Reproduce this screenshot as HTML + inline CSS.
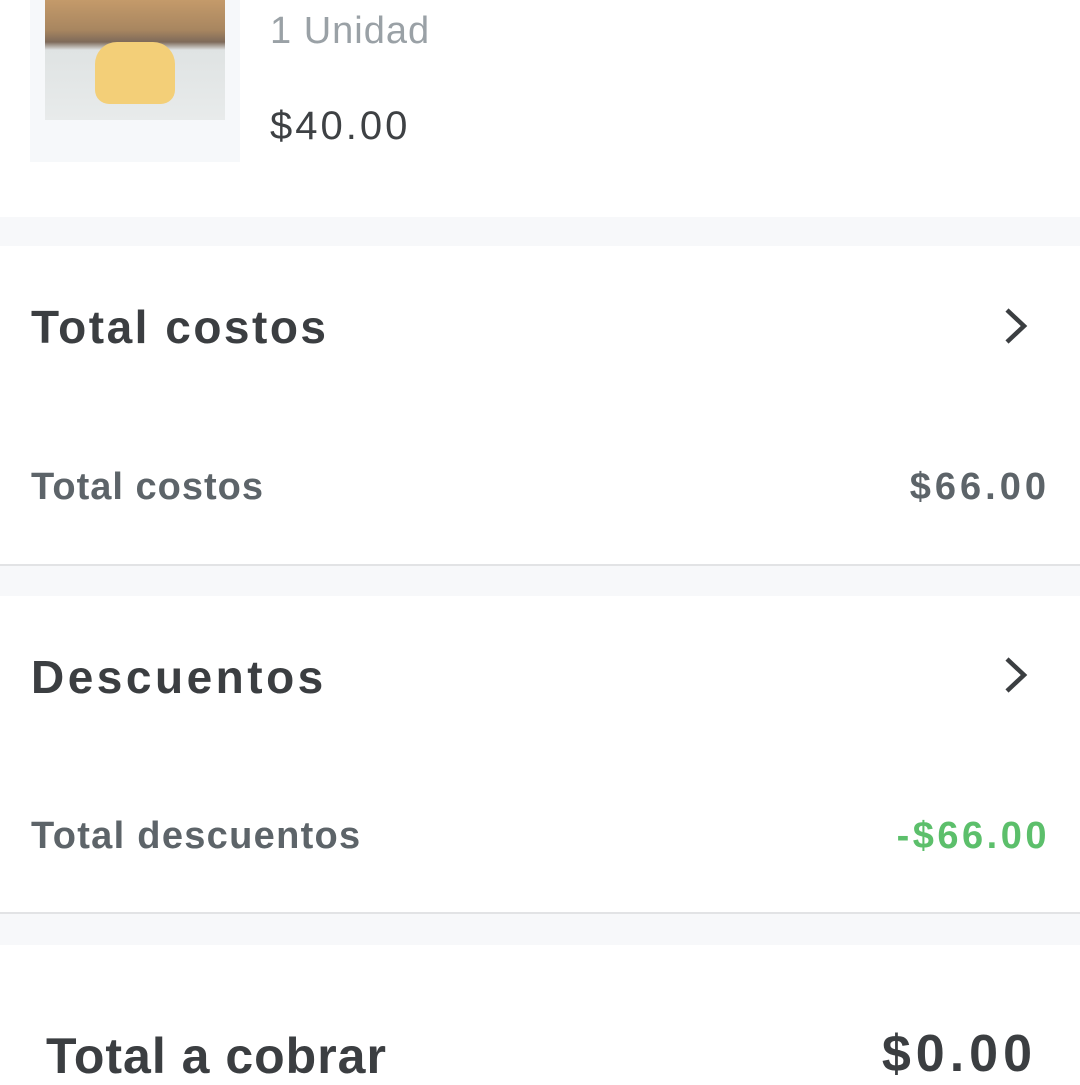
<!DOCTYPE html>
<html><head><meta charset="utf-8"><style>
body{margin:0;width:1080px;height:1080px;overflow:hidden;background:#fff;font-family:"Liberation Sans",sans-serif;position:relative}
.a{position:absolute;white-space:nowrap}
.band{position:absolute;left:0;width:1080px;background:#f7f8fa}
.line{position:absolute;left:0;width:1080px;height:2px;background:#e2e3e5}
.h{font-size:46px;font-weight:bold;color:#3b3e41}
.s{font-size:38px;font-weight:bold;color:#5d6469}
</style></head><body>
<div class="a" style="left:30px;top:0;width:210px;height:162px;background:#f6f8fa"></div>
<div class="a" style="left:45px;top:0;width:180px;height:120px;background:linear-gradient(#c49a6a 0,#a88660 30px,#7e6a5a 42px,#dfe3e3 50px,#e8ebeb 120px)"></div>
<div class="a" style="left:95px;top:42px;width:80px;height:62px;border-radius:22px 22px 14px 14px;background:#f3cf78"></div>
<div class="a" style="left:270px;top:10px;font-size:38px;color:#9aa1a6;letter-spacing:1px">1 Unidad</div>
<div class="a" style="left:270px;top:104px;font-size:40px;color:#3e4144;letter-spacing:3px">$40.00</div>
<div class="band" style="top:217px;height:29px"></div>
<div class="a h" style="left:31px;top:300px;letter-spacing:2.5px">Total costos</div>
<svg class="a" style="left:1000px;top:305px" width="34" height="42"><path d="M7 5 L24 21 L7 37" fill="none" stroke="#3b3e41" stroke-width="4.5"/></svg>
<div class="a s" style="left:31px;top:466px;letter-spacing:1px">Total costos</div>
<div class="a s" style="right:30px;top:466px;letter-spacing:4px">$66.00</div>
<div class="line" style="top:564px"></div>
<div class="band" style="top:566px;height:30px"></div>
<div class="a h" style="left:31px;top:650px;letter-spacing:3.5px">Descuentos</div>
<svg class="a" style="left:1000px;top:654px" width="34" height="42"><path d="M7 5 L24 21 L7 37" fill="none" stroke="#3b3e41" stroke-width="4.5"/></svg>
<div class="a s" style="left:31px;top:815px;letter-spacing:1.3px">Total descuentos</div>
<div class="a s" style="right:30px;top:815px;color:#5cbf6b;letter-spacing:3.5px">-$66.00</div>
<div class="line" style="top:912px"></div>
<div class="band" style="top:914px;height:31px"></div>
<div class="a h" style="left:46px;top:1027px;font-size:50px;letter-spacing:1px">Total a cobrar</div>
<div class="a h" style="right:43px;top:1024px;font-size:52px;letter-spacing:5px">$0.00</div>
</body></html>
